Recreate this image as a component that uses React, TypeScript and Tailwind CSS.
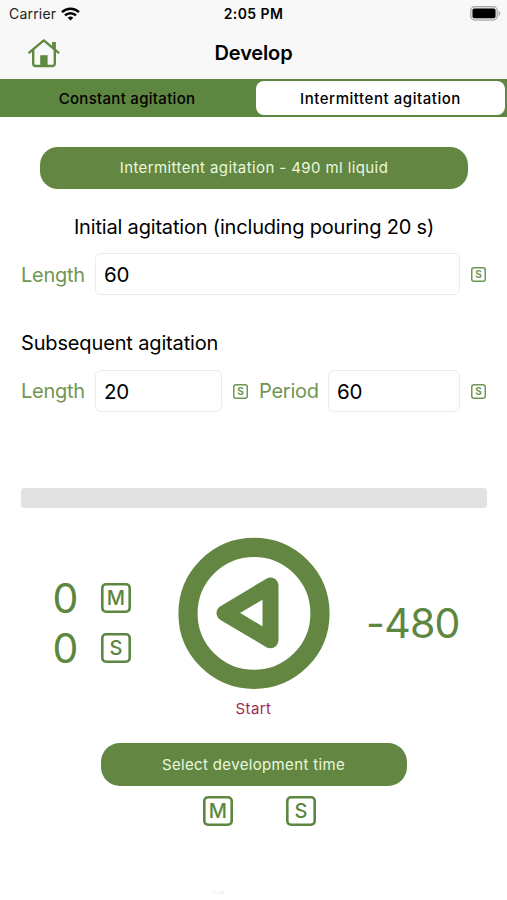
import { useState } from "react";

type Unit = 'M' | 'S';

// Rounded box holding the unit letter (minutes / seconds)
const UnitBadge: React.FC<{ unit: Unit; small?: boolean }> = ({ unit, small }) => (
  <span
    className={
      small
        ? 'flex h-[15px] w-[15px] shrink-0 items-center justify-center rounded-[3px] text-[10px] leading-none font-bold text-[#6f9653] inset-ring-[1.5px] inset-ring-[#6f9653]'
        : 'flex h-[30px] w-[30px] shrink-0 items-center justify-center rounded-[5px] text-[20px] leading-none font-medium text-[#5d8640] inset-ring-[2.6px] inset-ring-[#5d8640]'
    }
  >
    {unit}
  </span>
);

const HomeIcon: React.FC = () => (
  <svg width="34" height="30" viewBox="0 0 34 30" fill="none" stroke="#5f8a40" strokeWidth="2.4" strokeLinecap="round" strokeLinejoin="round">
    <path d="M2.2 14.6 16.8 2.4 31.4 14.6" />
    <path d="M6.2 12.5V25.600a2.400 2.400 0 0 0 2.400 2.400H25.400a2.400 2.400 0 0 0 2.400-2.400V12.500" />
    <path d="M27 4V11" strokeWidth="3.8" strokeLinecap="butt" />
    <path d="M13.2 17.2h7.400v10.800h-7.400z" fill="#5f8a40" stroke="none" />
  </svg>
);

const WifiIcon: React.FC = () => (
  <svg width="19" height="14" viewBox="0 0 19 14" fill="none" stroke="#000" strokeWidth="2.5">
    <path d="M1 5.2a12.2 12.2 0 0 1 17 0" />
    <path d="M4 8.4a7.9 7.9 0 0 1 11 0" />
    <path d="M9.5 13.6 6.7 10.8a4 4 0 0 1 5.6 0z" fill="#000" stroke="none" />
  </svg>
);

const BatteryIcon: React.FC = () => (
  <svg width="31" height="15" viewBox="0 0 31 15">
    <rect x="0.7" y="0.7" width="26.6" height="13.4" rx="4" fill="#e4e4e4" stroke="#aaa" strokeWidth="1.2" />
    <rect x="2.5" y="2.5" width="23" height="9.8" rx="2" fill="#000" />
    <path d="M28.6 5v4.8c1-.4 1.7-1.4 1.7-2.4S29.6 5.4 28.6 5z" fill="#aaa" />
  </svg>
);

const labelClass = 'text-[20px] tracking-[-0.25px] text-[#6f9653]';

const inputClass =
  'h-[42px] min-w-0 rounded-md border border-[#ececec] bg-white px-2 text-[20.5px] tracking-[-0.3px] text-black focus:outline-none';

const App: React.FC = () => {
  const [tab, setTab] = useState('intermittent');
  const [initialLength, setInitialLength] = useState('60');
  const [length, setLength] = useState('20');
  const [period, setPeriod] = useState('60');

  const tabClass = (name: string) =>
    tab === name
      ? 'h-[34px] w-[249px] rounded-[8px] bg-white pt-[2px] tracking-[0.55px]'
      : 'h-[34px] w-[254px] pt-[2px] pr-[4px] tracking-[0.3px]';

  return (
    <div className="flex h-[900px] w-[507px] flex-col overflow-hidden bg-white font-['Inter',sans-serif] text-black">
      {/* Status bar */}
      <div className="grid h-[27px] grid-cols-3 items-center bg-[#f8f8f8] pr-[6px] pl-[9px]">
        <div className="flex items-center gap-[5px] text-[14px] text-[#222]">
          <span className="tracking-[0.2px]">Carrier</span>
          <WifiIcon />
        </div>
        <div className="pr-[3px] text-center text-[14px] font-semibold tracking-[0.4px] whitespace-nowrap">2:05 PM</div>
        <div className="flex justify-end">
          <BatteryIcon />
        </div>
      </div>

      {/* Title bar */}
      <div className="grid h-[52px] grid-cols-3 items-center bg-[#f8f8f8]">
        <button type="button" aria-label="Home" className="ml-[27px] w-[34px]">
          <HomeIcon />
        </button>
        <h1 className="text-center text-[20px] font-semibold tracking-[-0.15px]">Develop</h1>
      </div>

      {/* Tabs */}
      <div className="flex h-[38px] items-center bg-[#5d8640] px-[2px] text-[15px] font-medium">
        <button type="button" onClick={() => setTab('constant')} className={tabClass('constant')}>
          Constant agitation
        </button>
        <button type="button" onClick={() => setTab('intermittent')} className={tabClass('intermittent')}>
          Intermittent agitation
        </button>
      </div>

      <div className="flex flex-col pt-[30px] pr-[20px] pl-[21px]">
        <button type="button" className="mx-[19px] h-[42px] rounded-[18px] bg-[#638743] text-[15px] tracking-[0.4px] text-[#eaf8dd]">
          Intermittent agitation - 490 ml liquid
        </button>

        {/* Initial agitation */}
        <h2 className="mt-[23px] text-center text-[20px] leading-[30px] tracking-[-0.18px] whitespace-nowrap">
          Initial agitation (including pouring 20 s)
        </h2>
        <div className="mt-[11px] flex items-center">
          <label className={`${labelClass} w-[74px] pt-[2px]`}>Length</label>
          <input
            value={initialLength}
            onChange={(e) => setInitialLength(e.target.value)}
            className={`${inputClass} mr-[11px] flex-1`}
          />
          <UnitBadge unit="S" small />
          <span className="w-px" />
        </div>

        {/* Subsequent agitation */}
        <h2 className="mt-[33px] text-[20px] leading-[30px] tracking-[-0.15px]">Subsequent agitation</h2>
        <div className="mt-[12px] flex items-center">
          <label className={`${labelClass} w-[74px]`}>Length</label>
          <input
            value={length}
            onChange={(e) => setLength(e.target.value)}
            className={`${inputClass} mr-[11px] w-[127px]`}
          />
          <UnitBadge unit="S" small />
          <label className={`${labelClass} ml-[11px] w-[69px]`}>Period</label>
          <input
            value={period}
            onChange={(e) => setPeriod(e.target.value)}
            className={`${inputClass} mr-[11px] flex-1`}
          />
          <UnitBadge unit="S" small />
          <span className="w-px" />
        </div>

        {/* Progress */}
        <div className="mt-[76px] h-5 rounded-[3px] bg-[#e2e2e3]" />
      </div>

      {/* Timer */}
      <div className="mt-[29px] flex h-[152px] items-center">
        <div className="flex w-[178px] flex-col gap-[8px] pt-[20px] pl-[52px] text-[41px] leading-[42px] text-[#5d8640]">
          <div className="flex items-center gap-[22px]">
            <span className="w-[27px] text-center">0</span>
            <UnitBadge unit="M" />
          </div>
          <div className="flex items-center gap-[22px]">
            <span className="w-[27px] text-center">0</span>
            <UnitBadge unit="S" />
          </div>
        </div>
        <button type="button" aria-label="Start">
          <svg width="152" height="152" viewBox="0 0 152 152" fill="none" stroke="#638743" strokeLinejoin="round">
            <circle cx="76" cy="76.4" r="66" strokeWidth="19.2" />
            <path d="M92.5 48.6V103.3L46.5 76z" strokeWidth="16" />
          </svg>
        </button>
        <div className="ml-[36px] pt-[20px] text-[41px] leading-none tracking-[-0.7px] text-[#5d8640]">-480</div>
      </div>
      <div className="mt-[8px] text-center text-[15px] leading-6 tracking-[0.4px] text-[#a52a50]">Start</div>

      <button type="button" className="mx-auto mt-[22px] h-[43px] w-[306px] shrink-0 rounded-[19px] bg-[#638743] pt-px text-[15px] tracking-[0.35px] text-[#eaf8dd]">
        Select development time
      </button>
      <div className="mt-[10px] flex gap-[53px] pl-[203px]">
        <UnitBadge unit="M" />
        <UnitBadge unit="S" />
      </div>

      {/* Faint footer mark */}
      <div className="mt-auto mb-[6px] ml-[212px] flex h-[3px] w-[12px] justify-end rounded-sm bg-[#fafafa]">
        <span className="h-[3px] w-[3px] bg-[#f1f1f1]" />
      </div>
    </div>
  );
};

export default App;
